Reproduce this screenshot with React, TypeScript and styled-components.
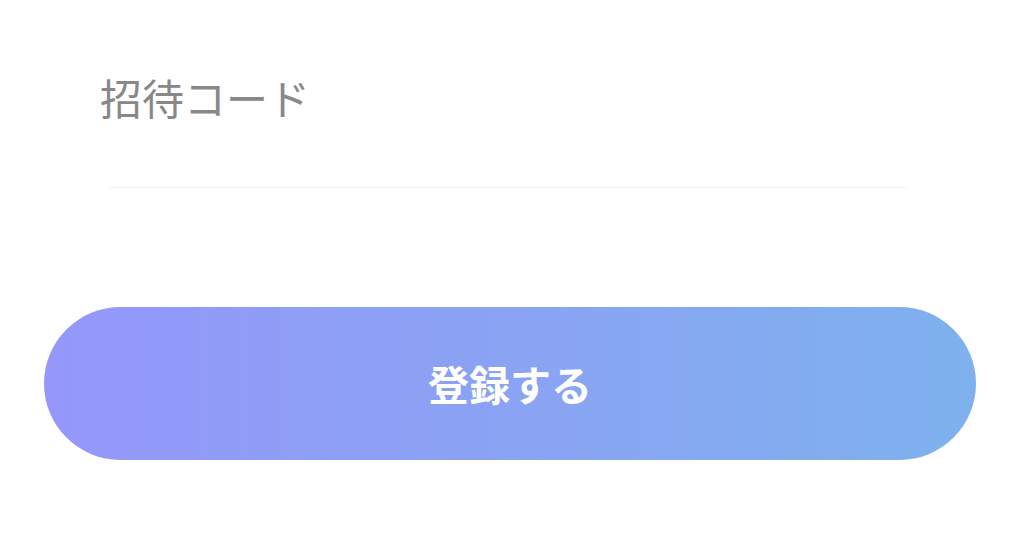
import React, { useState } from "react"
import styled, { createGlobalStyle } from "styled-components"

const GlobalStyle = createGlobalStyle`
  html, body {
    margin: 0;
    padding: 0;
    background: #ffffff;
  }
  body {
    font-family: "Noto Sans CJK JP", "Noto Sans", sans-serif;
  }
`

const App: React.FC = () => {
  const [code, setCode] = useState("")

  return (
    <>
      <GlobalStyle />
      <Page>
        <Field>
          <CodeInput
            value={code}
            onChange={e => setCode(e.target.value)}
            placeholder="招待コード"
          />
        </Field>
        <SubmitButton type="button">登録する</SubmitButton>
      </Page>
    </>
  )
}

export default App

const Page = styled.div`
  width: 1024px;
  height: 533px;
  box-sizing: border-box;
  padding: 62px 48px 0 44px;
  display: flex;
  flex-direction: column;
`

const Field = styled.div`
  margin: 0 68px 0 64px;
  border-bottom: 1px solid #f3f3f3;
  height: 126px;
  box-sizing: border-box;
`

const CodeInput = styled.input`
  width: 100%;
  border: none;
  outline: none;
  background: transparent;
  padding: 0;
  margin-left: -8px;
  font-family: "Noto Sans CJK JP", "Noto Sans", sans-serif;
  font-size: 42px;
  line-height: 70px;
  height: 70px;
  color: #333;

  &::placeholder {
    color: #888888;
  }
`

const SubmitButton = styled.button`
  margin-top: 119px;
  height: 153px;
  border: none;
  border-radius: 77px;
  background: linear-gradient(90deg, #9597fb 0%, #8aa3f3 50%, #7eb1ee 100%);
  color: #ffffff;
  font-family: "Noto Sans CJK JP", "Noto Sans", sans-serif;
  font-size: 41px;
  font-weight: 700;
  padding-bottom: 2px;
  cursor: pointer;
`
